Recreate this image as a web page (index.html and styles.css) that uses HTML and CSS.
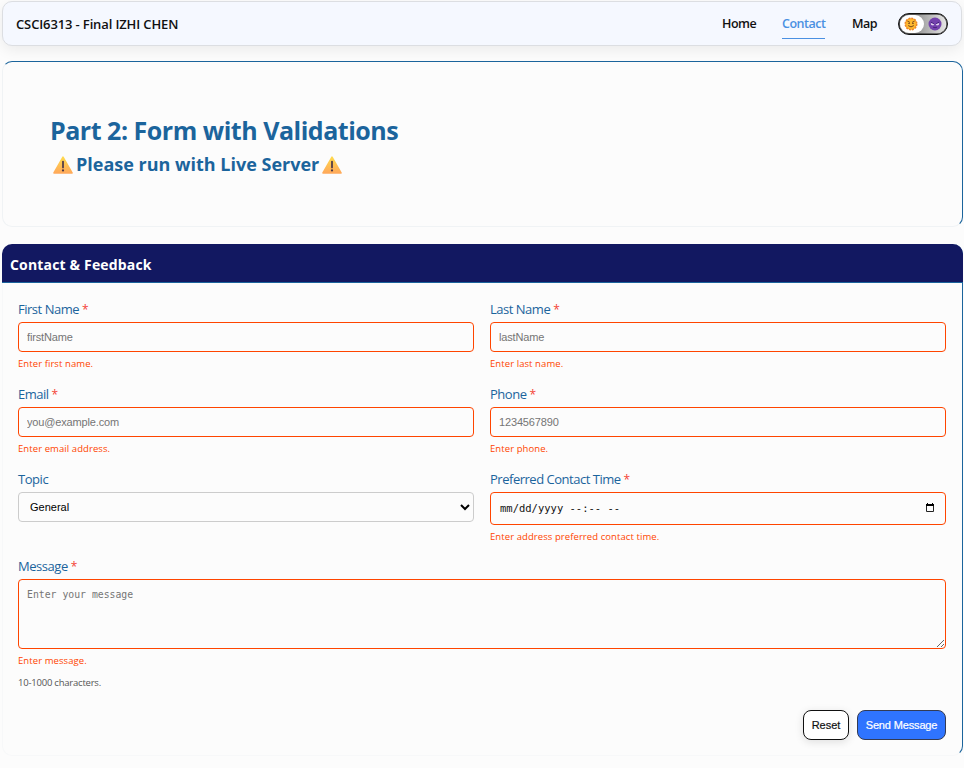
FILE: index.html
```html
<!DOCTYPE html>
<html lang="en">
<head>
<meta charset="utf-8">
<title>Contact</title>
<link rel="stylesheet" href="styles.css">
</head>
<body>
<header class="nav">
  <span class="brand">CSCI6313 - Final IZHI CHEN</span>
  <nav class="links">
    <a class="link home">Home</a>
    <a class="link contact active">Contact</a>
    <a class="link map">Map</a>
    <button class="toggle" type="button" aria-label="Theme">
      <span class="knob"></span>
      <svg class="face" viewBox="0 0 14 14"><circle cx="7" cy="7" r="5.8" fill="#f7a325" stroke="#ef8526" stroke-width="1.4" stroke-dasharray="2 1"/><circle cx="7" cy="7" r="4.8" fill="#ffb92e"/><path d="M3.5 4.2l2.4 1.2M10.5 4.2l-2.4 1.2M4.3 6.5h1.5M8.2 6.5h1.5M4.2 8.6q2.8 2.6 5.6 0" fill="none" stroke="#74451d" stroke-width="1"/></svg>
      <svg class="face" viewBox="0 0 14 14"><circle cx="7" cy="7" r="6.5" fill="#7442ad"/><path d="M3 5.2l3 1.7M11 5.2l-3 1.7" stroke="#42217c" stroke-width="1"/><path d="M2.8 6l3.4 1.2-1 1.2-2-.5zM11.2 6l-3.4 1.2 1 1.2 2-.5z" fill="#e3d5ee"/><path d="M5 10.2q2 1 4 0" fill="none" stroke="#44217b" stroke-width=".9"/></svg>
    </button>
  </nav>
</header>
<main>
  <section class="hero">
    <h1><span>Part 2: Form with Validations</span></h1>
    <h2>
      <svg class="warn" viewBox="0 0 20 18"><defs><linearGradient id="amber" x2="0" y2="1"><stop stop-color="#ffd94d"/><stop offset="1" stop-color="#ffa95a"/></linearGradient></defs><path d="M10 1.2L19 17H1z" fill="url(#amber)" stroke="url(#amber)" stroke-width="1.6" stroke-linejoin="round"/><path d="M10 5.5v6" stroke="#493547" stroke-width="1.7" stroke-linecap="round"/><circle cx="10" cy="14.4" r="1.1" fill="#493547"/></svg>
      <span class="notice">Please run with Live Server</span>
      <svg class="warn" viewBox="0 0 20 18"><path d="M10 1.2L19 17H1z" fill="url(#amber)" stroke="url(#amber)" stroke-width="1.6" stroke-linejoin="round"/><path d="M10 5.5v6" stroke="#493547" stroke-width="1.7" stroke-linecap="round"/><circle cx="10" cy="14.4" r="1.1" fill="#493547"/></svg>
    </h2>
  </section>
  <section class="card">
    <h3 class="card-title"><span>Contact &amp; Feedback</span></h3>
    <form class="form" novalidate>
      <div class="field"><label>First Name <i>*</i></label><input class="control" type="text" placeholder="firstName"><p class="error">Enter first name.</p></div>
      <div class="field"><label>Last Name <i>*</i></label><input class="control" type="text" placeholder="lastName"><p class="error">Enter last name.</p></div>
      <div class="field"><label>Email <i>*</i></label><input class="control" type="email" placeholder="you@example.com"><p class="error">Enter email address.</p></div>
      <div class="field"><label>Phone <i>*</i></label><input class="control" type="tel" placeholder="1234567890"><p class="error">Enter phone.</p></div>
      <div class="field"><label class="roomy">Topic</label><select class="control topic"><option>General</option></select></div>
      <div class="field"><label>Preferred Contact Time <i>*</i></label><div class="control date"><span>mm/dd/yyyy --:-- --</span><svg class="calendar" viewBox="0 0 10 10"><path d="M1.5 1.5h7v7h-7z" fill="none" stroke="#222"/><path d="M1 1h8v2H1zM2 0h1v1H2zM7 0h1v1H7z" fill="#000"/></svg></div><p class="error">Enter address preferred contact time.</p></div>
      <div class="field wide"><label class="roomy">Message <i>*</i></label><textarea class="control message" placeholder="Enter your message"></textarea><p class="error">Enter message.</p><p class="hint">10-1000 characters.</p></div>
      <div class="actions"><button class="btn reset" type="button">Reset</button><button class="btn send" type="button">Send Message</button></div>
    </form>
  </section>
</main>
</body>
</html>
```

FILE: styles.css
```css
* { box-sizing: border-box; }
body { margin: 0; padding: 1px 1px 0 2px; background: #fcfcfc; font-family: "Open Sans", "Noto Sans", sans-serif; overflow: hidden; }
h1, h2, h3, p { margin: 0; }
.nav { display: flex; align-items: center; justify-content: space-between; height: 45px; margin-right: 1px; padding: 0 13px; border: 1px solid #dcdee2; border-radius: 10px; background: #f5f8ff; box-shadow: 0 4px 14px rgba(0,0,0,.07); }
.brand { font-size: 13px; font-weight: 600; letter-spacing: -.13px; color: #111; white-space: nowrap; }
.links { display: flex; align-items: center; }
.link { height: 31px; line-height: 32px; font-size: 12.5px; font-weight: 600; color: #111; white-space: nowrap; }
.home { width: 34px; margin-right: 26px; letter-spacing: -.7px; }
.home, .map { letter-spacing: -.5px; }
.contact { width: 43px; margin-right: 27px; letter-spacing: -.5px; }
.map { width: 25px; margin-right: 21px; }
.active { color: #4a90e2; border-bottom: 1px solid #4a90e2; }
.toggle { position: relative; display: flex; align-items: center; justify-content: space-between; width: 50px; height: 22px; padding: 0 5px; border: 1px solid #111; border-radius: 11px; background: linear-gradient(90deg, #999 40%, #e8e8e8); box-shadow: inset 0 0 0 .5px #111; }
.knob { position: absolute; left: 1px; top: 1px; width: 24px; height: 18px; border-radius: 9px; background: #fff; }
.face { position: relative; width: 14px; height: 14px; }
.hero { height: 166px; margin-top: 15px; padding: 50px 47px; border: 1px solid #f0f3f5; border-top-color: #1b649c; border-right-color: #1b649c; border-radius: 10px; color: #1b649c; }
.hero h1 { height: 37px; line-height: 37px; font-size: 25px; font-weight: 700; letter-spacing: -.48px; white-space: nowrap; }
.hero h2 { display: flex; align-items: center; height: 30px; font-size: 18px; line-height: 30px; font-weight: 700; white-space: nowrap; }
.notice { width: 245px; margin-left: 3px; }
.warn { width: 20px; height: 18px; margin: 2px 0 0 3px; }
.notice + .warn { margin-left: 1px; }
.card { height: 512px; margin-top: 17px; border: 1px solid #f7f8f9; border-top: 0; border-right-color: #1b649c; border-radius: 10px; }
.card-title { height: 39px; margin: 0 -1px; padding: 0 8px; border-bottom: 1px solid #1b649c; border-radius: 10px 10px 0 0; background: #121861; color: #fff; font-size: 14px; line-height: 41px; font-weight: 700; letter-spacing: .17px; }
.form { display: grid; grid-template-columns: 456px 456px; grid-template-rows: 85px 85px 87px 153px 30px; column-gap: 16px; padding: 17px 15px 0; }
.field { min-width: 0; }
.wide, .actions { grid-column: 1 / -1; }
label { display: block; height: 22px; font-size: 13px; line-height: 18px; letter-spacing: -.48px; color: #1b649c; white-space: nowrap; }
label.roomy { letter-spacing: -.45px; }
label i { color: #f44336; font-size: 12px; font-style: normal; }
.control { display: block; width: 100%; height: 30px; margin: 0; padding: 0 8px; border: 1px solid #ff4500; border-radius: 4px; background: #fcfcfc; color: #111; font: 11px "Liberation Sans", Arial, sans-serif; outline: none; }
.control::placeholder { color: #757575; opacity: 1; letter-spacing: -.15px; }
.topic { border-color: #ccc; padding-left: 7px; padding-right: 0; color: #000; }
.date { display: flex; align-items: center; justify-content: space-between; height: 33px; padding: 0 10px 2px 9px; font: 10.5px "DejaVu Sans Mono", monospace; }
.calendar { width: 10px; height: 10px; }
.message { height: 70px; padding: 8px; font: 9.8px/13px "DejaVu Sans Mono", monospace; resize: vertical; }
.message::placeholder { letter-spacing: 0; }
.error { height: 22px; padding-top: 3px; font-size: 9.5px; line-height: 18px; letter-spacing: .08px; color: #ff4500; white-space: nowrap; }
.hint { font-size: 9.5px; line-height: 18px; padding-top: 3px; color: #555; letter-spacing: -.22px; }
.actions { display: flex; justify-content: flex-end; gap: 8px; }
.btn { height: 30px; padding: 0; border: 1px solid #111; border-radius: 8px; font: 11px "Liberation Sans", Arial, sans-serif; white-space: nowrap; -webkit-text-stroke: .2px currentColor; }
.reset { width: 46px; background: #fff; color: #111; box-shadow: 0 2px 8px rgba(0,0,0,.12); }
.send { width: 89px; border-color: #333b55; background: #2f74ff; color: #fff; letter-spacing: -.15px; }
```
